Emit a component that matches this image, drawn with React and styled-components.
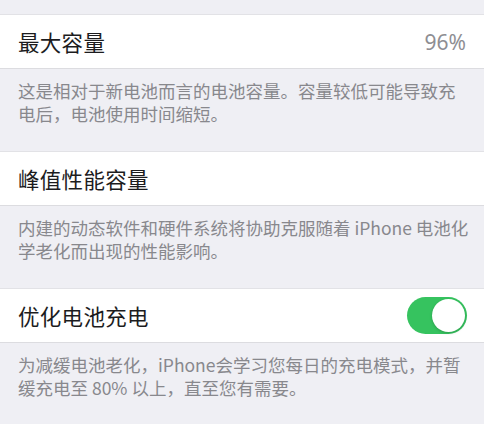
import React, { useState } from "react";
import styled, { createGlobalStyle } from "styled-components";

const GlobalStyle = createGlobalStyle`
  html, body {
    margin: 0;
    padding: 0;
    background: #efeff4;
  }
  body {
    font-family: "Noto Sans CJK SC", "Noto Sans", sans-serif;
    -webkit-font-smoothing: antialiased;
  }
`;

const Page = styled.div`
  padding-top: 14px;
  background: #efeff4;
  min-height: 424px;
  box-sizing: border-box;
`;

const Cell = styled.div`
  display: flex;
  align-items: center;
  justify-content: space-between;
  height: 55px;
  box-sizing: border-box;
  padding: 0 17px 0 18px;
  background: #ffffff;
  border-top: 1px solid #e2e2e6;
  border-bottom: 1px solid #dcdce0;
`;

const Title = styled.span`
  font-size: 21.5px;
  color: #1c1c1e;
  letter-spacing: 0.3px;
`;

const Value = styled.span`
  font-family: "Noto Sans", "Noto Sans CJK SC", sans-serif;
  font-size: 21px;
  color: #8e8e93;
  padding-right: 1px;
`;

const Footer = styled.div`
  padding: 10px 18px 25px;
  height: 82px;
  box-sizing: border-box;
  font-size: 17.5px;
  line-height: 23px;
  color: #88888d;
`;

const Line = styled.div`
  white-space: nowrap;
`;

const Track = styled.button`
  position: relative;
  width: 60px;
  height: 37px;
  border: none;
  padding: 0;
  border-radius: 19px;
  background: ${(p) => (p.on ? "#36c35f" : "#e5e5ea")};
  cursor: pointer;
`;

const Knob = styled.span`
  position: absolute;
  top: 2px;
  left: ${(p) => (p.on ? "25px" : "2px")};
  width: 33px;
  height: 33px;
  border-radius: 50%;
  background: #ffffff;
  box-shadow: 0 1px 3px rgba(0, 0, 0, 0.2);
`;

const Toggle = () => {
  const [on, setOn] = useState(true);
  return (
    <Track on={on ? 1 : 0} onClick={() => setOn(!on)}>
      <Knob on={on ? 1 : 0} />
    </Track>
  );
};

const sections = [
  {
    title: "最大容量",
    value: "96%",
    lines: [
      "这是相对于新电池而言的电池容量。容量较低可能导致充",
      "电后，电池使用时间缩短。",
    ],
  },
  {
    title: "峰值性能容量",
    lines: [
      "内建的动态软件和硬件系统将协助克服随着 iPhone 电池化",
      "学老化而出现的性能影响。",
    ],
  },
  {
    title: "优化电池充电",
    toggle: true,
    lines: [
      "为减缓电池老化，iPhone会学习您每日的充电模式，并暂",
      "缓充电至 80% 以上，直至您有需要。",
    ],
  },
];

const App = () => (
  <>
    <GlobalStyle />
    <Page>
      {sections.map((s) => (
        <section key={s.title}>
          <Cell>
            <Title>{s.title}</Title>
            {s.value && <Value>{s.value}</Value>}
            {s.toggle && <Toggle />}
          </Cell>
          <Footer>
            {s.lines.map((l) => (
              <Line key={l}>{l}</Line>
            ))}
          </Footer>
        </section>
      ))}
    </Page>
  </>
);

export default App;
